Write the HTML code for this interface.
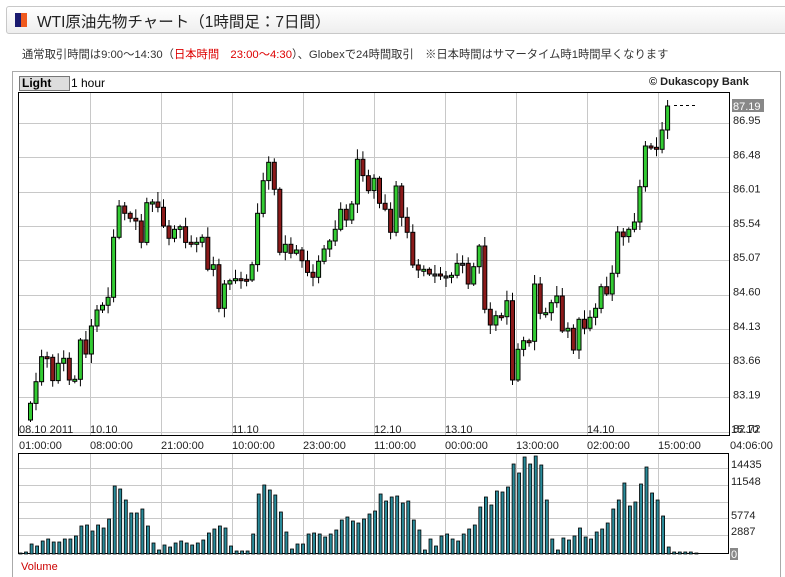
<!DOCTYPE html>
<html><head><meta charset="utf-8">
<style>
body{margin:0;background:#fff;width:785px;height:570px;overflow:hidden;position:relative;font-family:"Liberation Sans","Noto Sans CJK JP",sans-serif}
.hdr{position:absolute;left:6px;top:6px;width:790px;height:26px;border:1px solid #c8c8c8;border-radius:3px;background:linear-gradient(#fff,#eee)}
.flag1{position:absolute;left:15px;top:13px;width:6px;height:14px;background:#1a1a6e}
.flag2{position:absolute;left:21px;top:13px;width:6px;height:14px;background:#f05a1e}
.title{position:absolute;left:37px;top:10px;font-size:15.5px;color:#222;letter-spacing:0px}
.note{position:absolute;left:22px;top:46px;font-size:11.3px;color:#333;white-space:nowrap}
.note span{color:#d00}
.frame{position:absolute;left:12px;top:71px;width:767px;height:505px;border:1px solid #aaa;border-bottom:none}
.lt{position:absolute;left:19px;top:76px;width:47px;height:13px;background:#ddd;border:1px solid #777;font-size:12px;font-weight:bold;line-height:13px;padding-left:2px}
.hr{position:absolute;left:71px;top:76px;font-size:12px;line-height:14px}
.duk{position:absolute;left:649px;top:76px;font-size:11px;font-weight:bold;color:#222}
svg{position:absolute;left:0;top:0}
</style></head><body>
<div class="hdr"></div><div class="flag1"></div><div class="flag2"></div>
<div class="title">WTI原油先物チャート（1時間足：7日間）</div>
<div class="note">通常取引時間は9:00～14:30（<span>日本時間　23:00～4:30</span>）、Globexで24時間取引　※日本時間はサマータイム時1時間早くなります</div>
<div class="frame"></div>
<div class="lt">Light</div><div class="hr">1 hour</div>
<div class="duk">© Dukascopy Bank</div>
<svg id="s" width="785" height="570" xmlns="http://www.w3.org/2000/svg" font-family="Liberation Sans, sans-serif" font-size="11"></svg>
<script>
var s='';
var gx=[90,161,232,303,374,445,516,587,658];
gx.forEach(function(x){s+='<line x1="'+x+'.5" y1="92" x2="'+x+'.5" y2="436" stroke="#c8c8c8"/>';s+='<line x1="'+x+'.5" y1="453" x2="'+x+'.5" y2="554" stroke="#c8c8c8"/>';});
for(var k=0;k<10;k++){var y=Math.round(123+34.3*k);s+='<line x1="19" y1="'+y+'.5" x2="730" y2="'+y+'.5" stroke="#c8c8c8"/>';}
[468,485,502,518,535].forEach(function(y){s+='<line x1="19" y1="'+y+'.5" x2="728" y2="'+y+'.5" stroke="#c8c8c8"/>';});
s+='<rect x="18.5" y="92.5" width="711" height="343" fill="none" stroke="#000"/>';
s+='<rect x="18.5" y="453.5" width="710" height="100" fill="none" stroke="#000"/>';
var z=[820,755,680,682,752,700,685,750,748,630,672,588,540,526,502,322,228,250,265,273,337,218,216,232,288,325,298,290,337,342,337,322,418,404,535,462,452,446,448,450,404,250,152,97,178,367,343,370,360,392,427,442,394,357,333,298,238,
270,222,88,137,182,145,220,238,307,168,262,307,405,420,418,432,432,438,438,436,400,400,462,410,348,538,585,557,560,512,750,658,632,634,462,550,548,518,498,603,595,660,568,595,562,535,470,492,430,306,320,298,276,170,48,52,58,0,-72];
var prev=420;
for(var i=0;i<z.length;i++){
 var c=130+z[i]/3,o=prev,x=30+5.54*i;
 var t=Math.min(o,c),b=Math.max(o,c);if(b-t<2){b=t+2;}
 var wt=t-(2+(i*7)%9),wb=b+(2+(i*5)%8);
 var col=c<o-0.5?'#33cc33':(c>o+0.5?'#8b1a1a':'#555');
 s+='<line x1="'+(x+0.5).toFixed(1)+'" y1="'+wt.toFixed(1)+'" x2="'+(x+0.5).toFixed(1)+'" y2="'+wb.toFixed(1)+'" stroke="#000"/>';
 s+='<rect x="'+(x-1.5).toFixed(1)+'" y="'+t.toFixed(1)+'" width="4" height="'+(b-t).toFixed(1)+'" fill="'+col+'" stroke="#000" stroke-width="1"/>';
 prev=c;
}
s+='<line x1="674" y1="105.5" x2="698" y2="105.5" stroke="#000" stroke-dasharray="3,3"/>';
var h=[1,2,10,8,13,15,12,12,15,15,18,28,29,23,29,26,35,68,65,54,41,41,45,28,11,4,9,7,11,13,11,9,11,14,21,25,28,26,8,3,3,3,20,60,69,64,59,42,22,5,10,
10,20,21,20,17,20,24,34,37,33,31,35,40,43,60,53,57,58,51,53,34,24,4,15,8,18,20,15,13,20,25,29,47,57,49,63,62,67,90,81,97,90,98,89,54,15,4,16,14,
18,26,17,15,22,25,31,45,54,71,48,52,70,87,61,54,38,7,2,2,2,2,1];
for(var j=0;j<h.length;j++){var vx=20+5.54*j;s+='<rect x="'+(vx-1).toFixed(1)+'" y="'+(554-h[j])+'" width="3" height="'+h[j]+'" fill="#2a8a99" stroke="#000" stroke-width="0.8"/>';}
var pl=['86.95','86.48','86.01','85.54','85.07','84.60','84.13','83.66','83.19','82.72'];
for(k=0;k<10;k++){var y=123+34.3*k;s+='<text x="733" y="'+(y+1).toFixed(1)+'" fill="#222">'+pl[k]+'</text>';}
s+='<rect x="732" y="99" width="32" height="13" fill="#888"/><text x="733" y="110" fill="#fff">87.19</text>';
[['08.10 2011',19],['10.10',90],['11.10',232],['12.10',374],['13.10',445],['14.10',587],['15.10',731]].forEach(function(d){s+='<text x="'+d[1]+'" y="433" fill="#222">'+d[0]+'</text>';});
[['01:00:00',19],['08:00:00',90],['21:00:00',161],['10:00:00',232],['23:00:00',303],['11:00:00',374],['00:00:00',445],['13:00:00',516],['02:00:00',587],['15:00:00',658],['04:06:00',730]].forEach(function(d){s+='<text x="'+d[1]+'" y="449" fill="#222">'+d[0]+'</text>';});
[['14435',468],['11548',485],['5774',519],['2887',535]].forEach(function(d){s+='<text x="731" y="'+d[1]+'" fill="#222">'+d[0]+'</text>';});
s+='<rect x="730" y="548" width="8" height="12" fill="#888"/><text x="731" y="558" fill="#fff">0</text>';
s+='<text x="21" y="570" fill="#c00">Volume</text>';
document.getElementById('s').innerHTML=s;
</script>
</body></html>
